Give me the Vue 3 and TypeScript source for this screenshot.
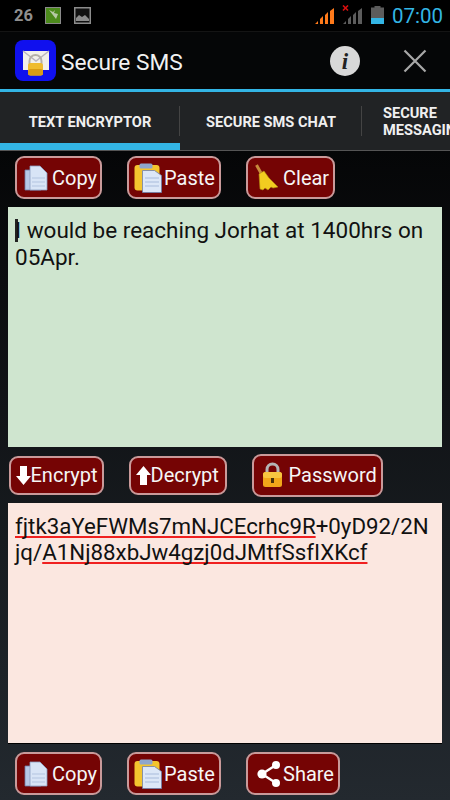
<script setup lang="ts">
const topButtons = [
  { label: "Copy", icon: "copy", width: 87 },
  { label: "Paste", icon: "paste", width: 94 },
  { label: "Clear", icon: "broom", width: 89 },
];
const midButtons = [
  { label: "Encrypt", icon: "down", width: 95, iconWidth: 15 },
  { label: "Decrypt", icon: "up", width: 98, iconWidth: 15 },
  { label: "Password", icon: "lock", width: 131, iconWidth: 26 },
];
const bottomButtons = [
  { label: "Copy", icon: "copy", width: 87 },
  { label: "Paste", icon: "paste", width: 94 },
  { label: "Share", icon: "share", width: 94 },
];
</script>

<template>
  <div class="screen">
    <div class="status">
      <span class="num">26</span>
      <svg class="st-icon" width="16" height="17" viewBox="0 0 16 17">
        <rect x="0.5" y="0.5" width="15" height="16" fill="#4c8a1c" stroke="#8a8a8a" />
        <path d="M4 3l7 9 2-5-4-1 1-3-2 2z" fill="#b6c9a6" />
      </svg>
      <svg class="st-icon second" width="17" height="17" viewBox="0 0 17 17">
        <rect x="0.75" y="0.75" width="15.5" height="15.5" fill="#111" stroke="#8c8c8c" stroke-width="1.5" />
        <path d="M2 14V11l3-3 3 2 3-2 4 4v2z" fill="#8c8c8c" />
      </svg>
      <div class="status-right">
        <svg class="sig1" width="20" height="17" viewBox="0 0 20 17">
          <path d="M0 16l3-3v3zM5 16v-5l3-3v8zM10 16V7l3-3v12zM15 16V3l4-3v16z" fill="#ff7a1a" />
        </svg>
        <svg class="sig2" width="21" height="20" viewBox="0 0 21 20">
          <path d="M1 19l3-3v3zM6 19v-5l3-3v8zM11 19v-9l3-3v12zM16 19V6l4-3v16z" fill="#5c5c5c" />
          <path d="M1 0l5 5M6 0L1 5" stroke="#d80f0f" stroke-width="1.6" transform="translate(0 0.5)" />
        </svg>
        <svg class="batt" width="13" height="18" viewBox="0 0 13 18">
          <rect x="3.5" y="0" width="6" height="2" fill="#5c5c5c" />
          <rect x="0" y="1.5" width="13" height="10.5" fill="#5c5c5c" />
          <rect x="0" y="12" width="13" height="6" fill="#33b5e5" />
        </svg>
        <span class="clock">07:00</span>
      </div>
    </div>

    <div class="action-bar">
      <svg class="logo" width="41" height="41" viewBox="0 0 41 41">
        <rect width="41" height="41" rx="8" fill="#1010ee" />
        <path d="M8 11h26v19H8z" fill="#f2f0ea" />
        <path d="M8 11l13 10 13-10" fill="none" stroke="#b9b5bd" stroke-width="1.4" />
        <path d="M14.5 25v-4a6 6 0 0 1 12 0v4" fill="none" stroke="#b5b0a8" stroke-width="2" />
        <rect x="13" y="23" width="15" height="12.5" rx="2.5" fill="#efbc2e" />
        <rect x="13" y="29" width="15" height="6.5" rx="2.5" fill="#d99c14" />
      </svg>
      <span class="title">Secure SMS</span>
      <svg class="info" width="30" height="30" viewBox="0 0 30 30">
        <circle cx="15" cy="15" r="15" fill="#d8d8d8" />
        <text x="15" y="23" text-anchor="middle" font-family="Liberation Serif" font-style="italic" font-weight="700" font-size="23" fill="#222">i</text>
      </svg>
      <svg class="close" width="24" height="24" viewBox="0 0 24 24">
        <path d="M1.5 1.5l21 21M22.5 1.5l-21 21" stroke="#a8a8a8" stroke-width="2.2" />
      </svg>
    </div>
    <div class="holo-line"></div>

    <div class="tabs">
      <div class="tab first">TEXT ENCRYPTOR</div>
      <div class="tab second-tab">SECURE SMS CHAT</div>
      <div class="tab third">SECURE<br />MESSAGING</div>
    </div>

    <div class="content">
      <div class="btn-row row-top">
        <button v-for="b in topButtons" :key="b.label" class="btn" :style="{ width: b.width + 'px' }">
          <svg width="26" height="30" viewBox="0 0 26 30" class="ic">
            <use :href="'#ic-' + b.icon" />
          </svg>
          {{ b.label }}
        </button>
      </div>

      <div class="box green">
        <span class="cursor"></span>I would be reaching Jorhat at 1400hrs on 05Apr.
      </div>

      <div class="btn-row row-mid">
        <button
          v-for="b in midButtons"
          :key="b.label"
          class="btn mid"
          :class="{ tall: b.icon === 'lock' }"
          :style="{ width: b.width + 'px' }"
        >
          <svg :width="b.iconWidth" height="30" :viewBox="`0 0 ${b.iconWidth} 30`" class="ic" :class="'ic-' + b.icon">
            <use :href="'#ic-' + b.icon" />
          </svg>
          {{ b.label }}
        </button>
      </div>

      <div class="box pink">
        <span class="sp">fjtk3aYeFWMs7mNJCEcrhc9R</span>+0yD92/2N<br />jq/<span class="sp">A1Nj88xbJw4gzj0dJMtfSsfIXKcf</span>
      </div>

      <div class="btn-row row-bot">
        <button v-for="b in bottomButtons" :key="b.label" class="btn" :style="{ width: b.width + 'px' }">
          <svg width="26" height="30" viewBox="0 0 26 30" class="ic">
            <use :href="'#ic-' + b.icon" />
          </svg>
          {{ b.label }}
        </button>
      </div>
    </div>

    <svg class="defs" width="0" height="0">
      <defs>
        <g id="ic-copy">
          <path d="M0 7h11l5 5v15H0z" fill="#b7c8e6" stroke="#6f7fa8" stroke-width="0.8" />
          <path d="M5 3h10l7 7v17H5z" fill="#d8e4f6" stroke="#8c9cc0" stroke-width="0.8" />
          <path d="M7 15h13M7 19h13M7 23h13" stroke="#b3c4e0" stroke-width="1" />
        </g>
        <g id="ic-paste">
          <rect x="-2.500" y="2" width="25" height="25.500" rx="3" fill="#f4c52e" />
          <rect x="2.500" y="0.500" width="13" height="5" rx="1.500" fill="#8ea6cc" />
          <path d="M5.500 7.500h12l7 5v17h-19z" fill="#dce7f7" stroke="#6f7fa8" stroke-width="0.8" />
          <path d="M8 15h14M8 19h14M8 23h14" stroke="#a8bcdc" stroke-width="1.200" />
        </g>
        <g id="ic-broom">
          <path d="M0.500 2l5 9" stroke="#c88a3c" stroke-width="3" />
          <path d="M3 11l5-3 5 7 9 9-5 1-2-1-3 3-3-2-2 2-3-1z" fill="#f2cc20" stroke="#b08a10" stroke-width="0.6" />
        </g>
        <g id="ic-down">
          <path d="M4 6h7v10h4L7.500 25 0 16h4z" fill="#fff" />
        </g>
        <g id="ic-up">
          <path d="M7.500 6L15 15h-4v10H4V15H0z" fill="#fff" />
        </g>
        <g id="ic-lock">
          <path d="M6 13V9.500a5.500 5.500 0 0 1 11 0V13" fill="none" stroke="#b4b4b4" stroke-width="3" />
          <rect x="2" y="12" width="19" height="15" rx="2.500" fill="#f2a71a" />
          <rect x="2" y="12" width="19" height="6" rx="2.500" fill="#f8c640" />
          <rect x="10" y="18" width="3" height="5" fill="#4a3208" />
        </g>
        <g id="ic-share">
          <path d="M20 6L6 15l14 9" fill="none" stroke="#fff" stroke-width="2.400" />
          <circle cx="20" cy="6" r="4" fill="#fff" />
          <circle cx="6" cy="15" r="4.600" fill="#fff" />
          <circle cx="20" cy="24" r="4" fill="#fff" />
        </g>
      </defs>
    </svg>
  </div>
</template>

<style>
body {
  background: #000;
}
</style>

<style scoped>
.screen {
  width: 450px;
  height: 800px;
  overflow: hidden;
  display: flex;
  flex-direction: column;
  font-family: Roboto, "Liberation Sans", sans-serif;
  background: #000;
}
.defs {
  position: absolute;
}
.status {
  height: 31px;
  flex: none;
  display: flex;
  align-items: center;
  background: #000;
  border-bottom: 1px solid #141414;
  padding-left: 14px;
}
.num {
  color: #8f8f8f;
  font-weight: 700;
  font-size: 16.5px;
  width: 31px;
}
.st-icon.second {
  margin-left: 13px;
}
.status-right {
  margin-left: auto;
  display: flex;
  align-items: center;
  height: 31px;
  padding-right: 7px;
}
.sig1 {
  margin-top: 1px;
}
.sig2 {
  margin-left: 7px;
  margin-top: -1px;
}
.batt {
  margin-left: 8px;
  margin-top: -1px;
}
.clock {
  color: #33b5e5;
  font-size: 20.5px;
  margin-left: 8px;
  margin-top: 1px;
}
.action-bar {
  height: 57px;
  flex: none;
  display: flex;
  align-items: center;
  padding-left: 15px;
  background: #050607;
}
.title {
  color: #f2f2f2;
  font-size: 22.7px;
  margin-left: 5px;
  margin-top: 3px;
}
.info {
  margin-left: auto;
}
.close {
  margin-left: 43px;
  margin-right: 23px;
}
.holo-line {
  height: 3px;
  flex: none;
  background: #33b5e5;
}
.tabs {
  height: 59px;
  flex: none;
  display: flex;
  background: #212325;
  border-bottom: 1px solid #555;
  box-sizing: border-box;
  overflow: hidden;
}
.tab {
  color: #f0f0f0;
  font-size: 14.6px;
  font-weight: 700;
  line-height: 17px;
  display: flex;
  align-items: center;
  position: relative;
  white-space: nowrap;
}
.tab.first {
  width: 180px;
  height: 59px;
  flex: none;
  justify-content: center;
  border-bottom: 8px solid #33b5e5;
  padding-top: 9px;
  box-sizing: border-box;
}
.tab.first::after,
.tab.second-tab::after {
  content: "";
  position: absolute;
  right: 0;
  top: 14px;
  height: 30px;
  width: 1px;
  background: #444;
}
.tab.second-tab {
  width: 182px;
  flex: none;
  justify-content: center;
  padding-top: 2px;
}
.tab.third {
  padding-left: 21px;
  padding-top: 2px;
}
.content {
  flex: 1;
  display: flex;
  flex-direction: column;
  background: linear-gradient(#050607, #23292f);
}
.btn-row {
  display: flex;
  flex: none;
}
.row-top,
.row-bot {
  padding-left: 15px;
  gap: 25px;
}
.row-top {
  padding-top: 5px;
  height: 56px;
  box-sizing: border-box;
}
.row-bot {
  padding-top: 8px;
}
.row-mid {
  height: 40px;
  align-items: center;
  padding: 8px 0 8px 9px;
  gap: 25px;
}
.btn {
  height: 43px;
  box-sizing: border-box;
  padding: 0 0 0 8px;
  margin: 0;
  display: flex;
  align-items: center;
  background: #750404;
  border: 2.5px solid #c99a9a;
  border-radius: 9px;
  color: #f6f6f6;
  font-family: inherit;
  font-size: 20px;
  white-space: nowrap;
}
.btn.mid {
  height: 39px;
  padding-left: 4.5px;
}
.btn.mid.tall {
  height: 43px;
}
.ic {
  flex: none;
  margin-right: 1px;
  overflow: visible;
}
.box {
  flex: none;
  box-sizing: border-box;
  margin: 0 8px;
  width: 434px;
  padding: 10px 7px 0;
  color: #111;
  font-size: 22.5px;
  line-height: 26.5px;
}
.green {
  height: 240px;
  background: #cfe5cf;
}
.pink {
  height: 241px;
  background: #fbe7e0;
  font-size: 22.3px;
  line-height: 26.3px;
  border-bottom: 1px solid #000;
}
.cursor {
  display: inline-block;
  width: 3px;
  height: 23px;
  margin-right: -3px;
  vertical-align: -4px;
  background: #222;
}
.sp {
  text-decoration: underline #f02020 2px;
  text-underline-offset: 2px;
  text-decoration-skip-ink: none;
}
.ic-down,
.ic-up {
  margin-right: 0;
}
.ic-lock {
  margin-left: 2px;
  margin-right: 2px;
}
</style>
